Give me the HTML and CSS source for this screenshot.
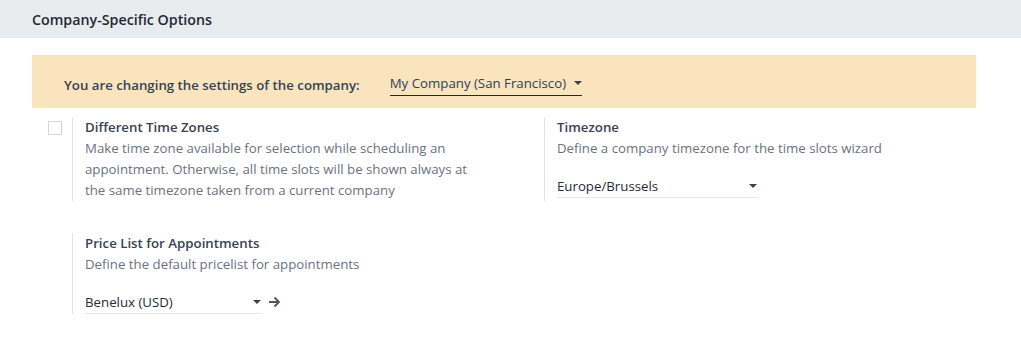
FILE: index.html
```html
<!DOCTYPE html>
<html lang="en">
<head>
    <meta charset="UTF-8">
    <title>Company-Specific Options</title>
    <link rel="stylesheet" href="styles.css">
</head>
<body>
    <h2 class="section-title">Company-Specific Options</h2>

    <div class="section-body">
        <div class="company-alert">
            <span class="alert-label">You are changing the settings of the company:</span>
            <div class="select company-select">
                <span class="select-value">My Company (San Francisco)</span>
                <span class="caret"></span>
            </div>
        </div>

        <div class="settings-grid">
            <div class="setting">
                <div class="setting-left">
                    <span class="checkbox"></span>
                </div>
                <div class="setting-right">
                    <div class="setting-label">Different Time Zones</div>
                    <div class="setting-help">Make time zone available for selection while scheduling an appointment. Otherwise, all time slots will be shown always at the same timezone taken from a current company</div>
                </div>
            </div>

            <div class="setting">
                <div class="setting-left"></div>
                <div class="setting-right">
                    <div class="setting-label">Timezone</div>
                    <div class="setting-help">Define a company timezone for the time slots wizard</div>
                    <div class="select field-select tz-select">
                        <span class="select-value">Europe/Brussels</span>
                        <span class="caret"></span>
                    </div>
                </div>
            </div>

            <div class="setting">
                <div class="setting-left"></div>
                <div class="setting-right">
                    <div class="setting-label">Price List for Appointments</div>
                    <div class="setting-help">Define the default pricelist for appointments</div>
                    <div class="field-row">
                        <div class="select field-select price-select">
                            <span class="select-value">Benelux (USD)</span>
                            <span class="caret"></span>
                        </div>
                        <svg class="open-link" width="13" height="12" viewBox="0 0 13 12">
                            <path d="M1 6h10M6.5 1.5L11 6l-4.5 4.5" fill="none" stroke="#4b5563" stroke-width="1.8"/>
                        </svg>
                    </div>
                </div>
            </div>
        </div>
    </div>
</body>
</html>
```

FILE: styles.css
```css
body {
    margin: 0;
    font-family: 'Open Sans', 'Noto Sans', sans-serif;
    font-size: 13.25px;
    color: #374151;
    background: #ffffff;
}

.section-title {
    margin: 0;
    height: 38px;
    padding: 0 32px;
    display: flex;
    align-items: center;
    background: #e9ecef;
    font-size: 14.25px;
    font-weight: 600;
    color: #1f2937;
}

.section-body {
    padding: 17px 45px 0 32px;
}

.company-alert {
    display: flex;
    align-items: center;
    height: 53px;
    padding: 0 32px;
    background: #f9e4be;
}

.alert-label {
    font-weight: 600;
    color: #374151;
    margin-right: 30px;
    margin-top: 6px;
}

.select {
    display: flex;
    align-items: center;
    justify-content: space-between;
    position: relative;
}

.select-value {
    white-space: nowrap;
    overflow: hidden;
}

.caret {
    width: 0;
    height: 0;
    border-left: 4px solid transparent;
    border-right: 4px solid transparent;
    border-top: 4px solid #374151;
}

.company-select {
    width: 192px;
    height: 23px;
    margin-top: 4px;
    border-bottom: 1px solid #1f2937;
    color: #2f3e56;
}

.company-select .select-value {
    width: 176px;
}

.settings-grid {
    display: grid;
    grid-template-columns: 472px 472px;
    row-gap: 32px;
    padding-top: 9px;
}

.setting {
    display: flex;
}

.setting-left {
    width: 40px;
    flex: none;
    padding: 4px 0 0 16px;
    box-sizing: border-box;
}

.checkbox {
    display: block;
    width: 12px;
    height: 12px;
    border: 1px solid #d1d5db;
    background: #ffffff;
}

.setting-right {
    border-left: 1px solid #dee2e6;
    padding: 0 12px 0 12px;
    width: 395px;
}

.setting-label {
    font-weight: 600;
    color: #374151;
    line-height: 21px;
}

.setting-help {
    color: #6b7280;
    line-height: 21px;
}

.field-select {
    margin-top: 15px;
    height: 23px;
    border-bottom: 1px solid #e5e7eb;
    padding-right: 1px;
    color: #1f2937;
}

.tz-select {
    width: 200px;
}

.price-select {
    width: 176px;
}

.field-row {
    display: flex;
    align-items: center;
}

.open-link {
    margin: 15px 0 0 6px;
}
```
